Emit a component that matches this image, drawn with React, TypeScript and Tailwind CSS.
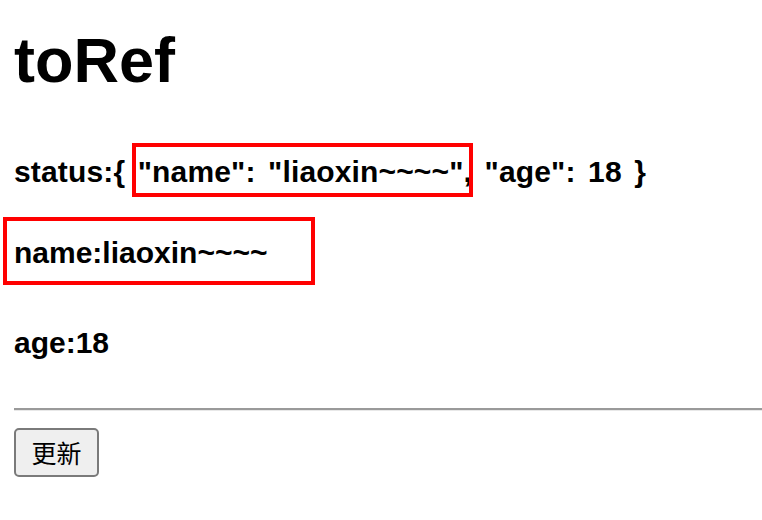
import React from "react";

export default function App() {
  return (
    <div className="min-h-[520px] w-full bg-white pl-[14px] text-black [font-family:'Liberation_Sans',Arial,sans-serif]">
      <h1 className="pt-[29px] text-[63px] leading-[63px] font-bold">toRef</h1>

      <div className="mt-[65px] text-[30px] leading-[30px] font-bold whitespace-pre tracking-[0.15px] [word-spacing:4px]">
        {"status:{ "}
        <span className="relative inline-block">
          {"\"name\": \"liaoxin~~~~\""}
          <span className="pointer-events-none absolute -top-[14px] -bottom-[10px] -left-[6px] -right-[9px] border-[4px] border-[#ff0000]" />
        </span>
        {", \"age\": 18 }"}
      </div>

      <div className="mt-[51px] text-[30px] leading-[30px] font-bold">
        <span className="relative inline-block">
          name:liaoxin~~~~
          <span className="pointer-events-none absolute -top-[21px] -bottom-[17px] -left-[11px] -right-[48px] border-[4px] border-[#ff0000]" />
        </span>
      </div>

      <div className="mt-[60px] text-[30px] leading-[30px] font-bold">age:18</div>

      <div className="mt-[50px] h-[3px] border-t-[2px] border-b border-t-[#9a9a9a] border-b-[#e8e8e8]" />

      <button className="mt-[17px] flex h-[49px] w-[85px] items-center justify-center rounded-[5px] border-2 border-[#7a7a7a] bg-[#efefef] text-[25px] leading-none text-black [font-family:'Noto_Sans_CJK_SC',sans-serif]">
        更新
      </button>
    </div>
  );
}
